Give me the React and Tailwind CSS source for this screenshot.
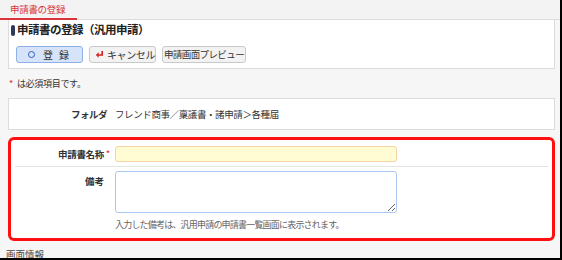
import React from 'react';

const jp = { fontFamily: '"Noto Sans CJK JP", "Noto Sans", sans-serif' };

function Button({ children, variant = 'gray', className = '' }) {
    const styles = variant === 'blue'
        ? 'bg-[#d7e3f8] border-[#8eb1e6]'
        : 'bg-[#f2f2f2] border-[#c9c9c9]';
    return (
        <div className={`h-[17px] shrink-0 flex items-center whitespace-nowrap border rounded-[3px] text-[10px] text-[#333] leading-none ${styles} ${className}`}>
            {children}
        </div>
    );
}

function App() {
    return (
        <div className="w-[562px] h-[260px] bg-black overflow-hidden" style={jp}>
            <div className="w-[560px] h-[258px] bg-[#f6f6f6] overflow-hidden text-[#333]">
                {/* tab bar */}
                <div className="h-[20px] border-b border-[#dcdcdc] bg-[#f3f3f3] flex">
                    <div className="w-[77px] h-[20px] border-b-2 border-[#d9343a] flex items-center pl-[10px] text-[9.5px] tracking-[-0.3px] text-[#d9343a]">
                        申請書の登録
                    </div>
                </div>

                {/* header panel */}
                <div className="ml-[8px] mr-[5px] h-[49px] bg-white border-x border-b border-[#dcdcdc]">
                    <div className="flex items-center pt-[4px] pl-[2px] h-[16px]">
                        <div className="w-[4px] h-[11px] rounded-full bg-[#2b3a5c] mr-[2px]" />
                        <span className="text-[11.5px] font-bold tracking-[-0.5px] text-[#222]">申請書の登録（汎用申請）</span>
                    </div>
                    <div className="flex items-center gap-[6px] pl-[7px] mt-[10px]">
                        <Button variant="blue" className="w-[67px] pl-[11px]">
                            <span className="w-[7px] h-[7px] rounded-full border-[1.5px] border-[#2d5fc0] mr-[8px]" />
                            <span className="tracking-[6px]">登録</span>
                        </Button>
                        <Button className="w-[67px] pl-[5px]">
                            <svg width="9" height="9" viewBox="0 0 10 10" className="mr-[3px] shrink-0">
                                <path d="M8 1v4.5H3" fill="none" stroke="#d42020" strokeWidth="1.8" />
                                <path d="M1 5.5l3-3v6z" fill="#d42020" />
                            </svg>
                            <span className="tracking-[-0.4px]">キャンセル</span>
                        </Button>
                        <Button className="w-[84px] justify-center">
                            <span className="text-[9.5px] tracking-[-0.6px]">申請画面プレビュー</span>
                        </Button>
                    </div>
                </div>

                <div className="h-[29px] flex items-center pl-[9px] text-[9px] tracking-[-0.3px]">
                    <span className="text-[#e02020] mr-[4px]">*</span>
                    は必須項目です。
                </div>

                {/* folder */}
                <div className="ml-[8px] mr-[5px] h-[32px] bg-white border border-[#dcdcdc] flex items-center text-[9.5px]">
                    <div className="w-[98px] text-right font-bold tracking-[-0.5px]">フォルダ</div>
                    <div className="pl-[8px] tracking-[-0.4px]">フレンド商事／稟議書・諸申請＞各種届</div>
                </div>

                {/* form */}
                <div className="ml-[8px] mr-[5px] mt-[7px] h-[104px] bg-white border-[3px] border-[#ff1010] rounded-[6px] px-[4px]">
                    <div className="flex items-center h-[27px] pt-[2px] border-b border-[#e3e3e3]">
                        <div className="w-[95px] text-right text-[9.5px] font-bold tracking-[-0.3px]">
                            申請書名称 <span className="text-[#e02020] font-normal">*</span>
                        </div>
                        <div className="ml-[5px] w-[282px] h-[16px] rounded-[3px] bg-[#fffbd2] border border-[#f5d3a4]" />
                    </div>
                    <div className="flex mt-[4px]">
                        <div className="w-[95px] pr-[6px] text-right text-[9.5px] font-bold pt-[3px]">備考</div>
                        <div className="ml-[5px]">
                            <textarea readOnly className="block w-[282px] h-[42px] rounded-[3px] border border-[#a9c7f2] bg-white resize-y outline-none" />
                            <div className="mt-[5px] text-[9px] tracking-[-0.8px] text-[#666]">
                                入力した備考は、汎用申請の申請書一覧画面に表示されます。
                            </div>
                        </div>
                    </div>
                </div>

                <div className="mt-[7px] pl-[6px] text-[9.5px] text-[#444] leading-[12px]">画面情報</div>
            </div>
        </div>
    );
}

export default App;
